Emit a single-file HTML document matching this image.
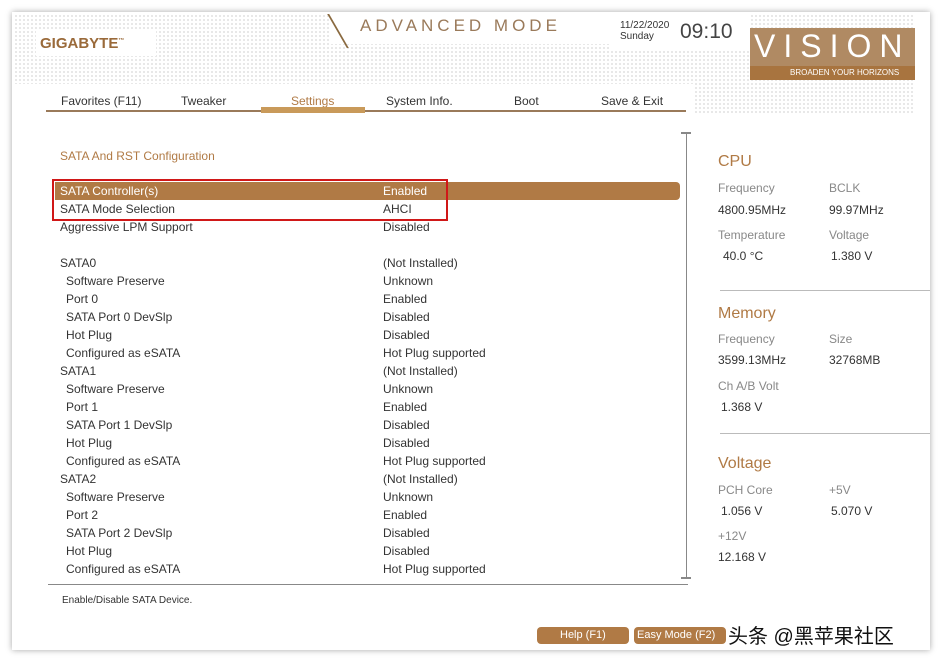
<!DOCTYPE html><html><head><style>
body{margin:0;width:942px;height:662px;background:#fff;font-family:"Liberation Sans",sans-serif;position:relative;overflow:hidden}
.frame{position:absolute;left:12px;top:12px;width:918px;height:638px;background:#fff;box-shadow:0 0 6px rgba(0,0,0,.35)}
.dots{position:absolute;left:14px;top:14px;width:900px;height:100px;background-image:radial-gradient(#d4d4d4 0.7px,transparent 0.9px);background-size:4px 4px}
.a{position:absolute;white-space:nowrap;font-size:12px;color:#333}
.g{color:#888}
.o{color:#b07a45}
</style></head><body>
<div class="frame"></div>
<div class="dots"></div>
<div style="position:absolute;left:36px;top:30px;width:120px;height:26px;background:#fff"></div>
<div class="a" style="left:40px;top:35px;font-size:15px;font-weight:bold;color:#9a6a3a">GIGABYTE<sup style="font-size:6px">™</sup></div>
<div style="position:absolute;left:330px;top:14px;width:290px;height:30px;background:#fff"></div>
<div style="position:absolute;left:337px;top:14px;width:2px;height:34px;background:#8a6a40;transform:skewX(30deg)"></div>
<div class="a" style="left:360px;top:16px;font-size:17px;letter-spacing:4px;color:#9a7a5a">ADVANCED MODE</div>
<div style="position:absolute;left:610px;top:14px;width:140px;height:36px;background:#fff"></div>
<div class="a" style="left:620px;top:20px;font-size:10px">11/22/2020<br>Sunday</div>
<div class="a" style="left:680px;top:20px;font-size:21px;color:#444">09:10</div>
<div style="position:absolute;left:750px;top:28px;width:165px;height:52px;background:#b08a63"></div>
<div class="a" style="left:754px;top:28px;font-size:32px;letter-spacing:8px;color:#fff">VISION</div>
<div style="position:absolute;left:750px;top:66px;width:165px;height:14px;background:#a8743f"></div>
<div class="a" style="left:790px;top:68px;font-size:8px;color:#fff">BROADEN YOUR HORIZONS</div>
<div style="position:absolute;left:14px;top:84px;width:680px;height:30px;background:#fff"></div>
<div class="a" style="left:61px;top:94px">Favorites (F11)</div>
<div class="a" style="left:181px;top:94px">Tweaker</div>
<div class="a o" style="left:291px;top:94px">Settings</div>
<div class="a" style="left:386px;top:94px">System Info.</div>
<div class="a" style="left:514px;top:94px">Boot</div>
<div class="a" style="left:601px;top:94px">Save &amp; Exit</div>
<div style="position:absolute;left:46px;top:110px;width:640px;height:2px;background:#9a7a5a"></div>
<div style="position:absolute;left:261px;top:107px;width:104px;height:6px;background:#c99a5a"></div>
<div class="a o" style="left:60px;top:149px">SATA And RST Configuration</div>
<div style="position:absolute;left:55px;top:182px;width:625px;height:18px;background:#b07a45;border-radius:0 4px 4px 0"></div>
<div style="position:absolute;left:52px;top:179px;width:392px;height:38px;border:2px solid #d01818"></div>
<div id="rows"></div>
<div style="position:absolute;left:686px;top:134px;width:1px;height:444px;background:#888"></div>
<div style="position:absolute;left:681px;top:132px;width:10px;height:2px;background:#888"></div>
<div style="position:absolute;left:681px;top:577px;width:10px;height:2px;background:#888"></div>
<div style="position:absolute;left:48px;top:584px;width:640px;height:1px;background:#888"></div>
<div class="a" style="left:62px;top:595px;font-size:10px">Enable/Disable SATA Device.</div>
<div style="position:absolute;left:720px;top:290px;width:210px;height:1px;background:#bbb"></div>
<div style="position:absolute;left:720px;top:433px;width:210px;height:1px;background:#bbb"></div>
<div class="a o" style="left:718px;top:153px;font-size:16px">CPU</div>
<div class="a g" style="left:718px;top:181px">Frequency</div><div class="a g" style="left:829px;top:181px">BCLK</div>
<div class="a" style="left:718px;top:203px">4800.95MHz</div><div class="a" style="left:829px;top:203px">99.97MHz</div>
<div class="a g" style="left:718px;top:228px">Temperature</div><div class="a g" style="left:829px;top:228px">Voltage</div>
<div class="a" style="left:723px;top:249px">40.0 °C</div><div class="a" style="left:831px;top:249px">1.380 V</div>
<div class="a o" style="left:718px;top:305px;font-size:16px">Memory</div>
<div class="a g" style="left:718px;top:332px">Frequency</div><div class="a g" style="left:829px;top:332px">Size</div>
<div class="a" style="left:718px;top:353px">3599.13MHz</div><div class="a" style="left:829px;top:353px">32768MB</div>
<div class="a g" style="left:718px;top:379px">Ch A/B Volt</div>
<div class="a" style="left:721px;top:400px">1.368 V</div>
<div class="a o" style="left:718px;top:455px;font-size:16px">Voltage</div>
<div class="a g" style="left:718px;top:483px">PCH Core</div><div class="a g" style="left:829px;top:483px">+5V</div>
<div class="a" style="left:721px;top:504px">1.056 V</div><div class="a" style="left:831px;top:504px">5.070 V</div>
<div class="a g" style="left:718px;top:529px">+12V</div>
<div class="a" style="left:718px;top:550px">12.168 V</div>
<div style="position:absolute;left:537px;top:627px;width:92px;height:17px;background:#b07a45;border-radius:4px"></div>
<div class="a" style="left:560px;top:629px;color:#fff;font-size:11px">Help (F1)</div>
<div style="position:absolute;left:634px;top:627px;width:92px;height:17px;background:#b07a45;border-radius:4px"></div>
<div class="a" style="left:637px;top:629px;color:#fff;font-size:11px">Easy Mode (F2)</div>
<div class="a" style="left:728px;top:620px;font-size:20px;color:#111;font-family:'Liberation Sans','Noto Sans CJK SC',sans-serif">头条 @黑苹果社区</div>
<script>
var r=[["SATA Controller(s)","Enabled",60,1],["SATA Mode Selection","AHCI",60],["Aggressive LPM Support","Disabled",60],null,["SATA0","(Not Installed)",60],["Software Preserve","Unknown",66],["Port 0","Enabled",66],["SATA Port 0 DevSlp","Disabled",66],["Hot Plug","Disabled",66],["Configured as eSATA","Hot Plug supported",66],["SATA1","(Not Installed)",60],["Software Preserve","Unknown",66],["Port 1","Enabled",66],["SATA Port 1 DevSlp","Disabled",66],["Hot Plug","Disabled",66],["Configured as eSATA","Hot Plug supported",66],["SATA2","(Not Installed)",60],["Software Preserve","Unknown",66],["Port 2","Enabled",66],["SATA Port 2 DevSlp","Disabled",66],["Hot Plug","Disabled",66],["Configured as eSATA","Hot Plug supported",66]];
var h="";r.forEach(function(x,i){if(!x)return;var y=184+i*18,c=x[3]?"color:#fff;":"";h+='<div class="a" style="'+c+'left:'+x[2]+'px;top:'+y+'px">'+x[0]+'</div><div class="a" style="'+c+'left:383px;top:'+y+'px">'+x[1]+'</div>';});
document.getElementById("rows").innerHTML=h;
</script>
</body></html>
